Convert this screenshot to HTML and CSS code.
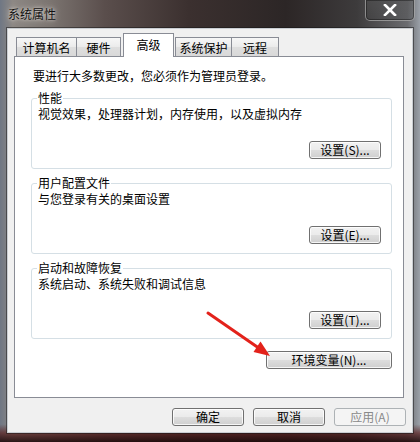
FILE: index.html
```html
<!DOCTYPE html>
<html lang="zh-CN">
<head>
<meta charset="utf-8">
<title>系统属性</title>
<link rel="stylesheet" href="styles.css">
</head>
<body>
<div class="frame">
  <div class="titlebar">
    <span class="title">系统属性</span>
    <div class="close">
      <svg width="14" height="12" viewBox="0 0 14 12"><path d="M2 1 L12 11 M12 1 L2 11" stroke="#fff" stroke-width="2.6" stroke-linecap="square"/></svg>
    </div>
  </div>
  <div class="client">
    <div class="tabs">
      <div class="tab t1">计算机名</div>
      <div class="tab t2">硬件</div>
      <div class="tab active">高级</div>
      <div class="tab t4">系统保护</div>
      <div class="tab t5">远程</div>
    </div>
    <div class="panel">
      <div class="intro">要进行大多数更改，您必须作为管理员登录。</div>
      <div class="group">
        <div class="legend">性能</div>
        <div class="desc">视觉效果，处理器计划，内存使用，以及虚拟内存</div>
        <div class="btnrow"><button class="btn">设置(S)...</button></div>
      </div>
      <div class="group">
        <div class="legend">用户配置文件</div>
        <div class="desc">与您登录有关的桌面设置</div>
        <div class="btnrow"><button class="btn">设置(E)...</button></div>
      </div>
      <div class="group">
        <div class="legend">启动和故障恢复</div>
        <div class="desc">系统启动、系统失败和调试信息</div>
        <div class="btnrow"><button class="btn">设置(T)...</button></div>
      </div>
      <div class="btnrow envrow"><button class="btn wide">环境变量(N)...</button></div>
    </div>
    <div class="footer">
      <button class="btn">确定</button>
      <button class="btn">取消</button>
      <button class="btn disabled">应用(A)</button>
    </div>
  </div>
  <svg class="arrow" width="420" height="442" viewBox="0 0 420 442">
    <line x1="208" y1="313" x2="258" y2="347.5" stroke="#e3221b" stroke-width="3" stroke-linecap="round"/>
    <polygon points="270,356 253.5,352 260.5,341.5" fill="#e3221b"/>
  </svg>
</div>
</body>
</html>
```
FILE: styles.css
```css
* { box-sizing: border-box; }
html, body { margin: 0; padding: 0; }
body {
  width: 420px;
  height: 442px;
  overflow: hidden;
  font-family: "Noto Sans CJK SC", "Noto Sans", sans-serif;
  font-size: 12px;
  color: #000;
}
.frame {
  position: relative;
  width: 420px;
  height: 442px;
  background:
    linear-gradient(180deg, rgba(0,0,0,0) 0%, rgba(0,0,0,0) 96%, rgba(90,30,30,0.7) 98%, rgba(30,10,10,0.9) 100%),
    linear-gradient(90deg, #6f7784 0%, #8d8884 3%, #7b7470 12%, #5a4e4c 25%, #3b302f 45%, #2c2626 68%, #3d3b3c 85%, #6b6c70 97%, #9aa0a8 100%);
}
.titlebar {
  height: 28px;
  display: flex;
  justify-content: space-between;
  align-items: flex-start;
}
.title {
  padding: 7px 0 0 8px;
  line-height: 14px;
  color: #111;
  text-shadow: 0 0 6px rgba(230,225,220,0.9), 0 0 3px rgba(230,225,220,0.8);
}
.close {
  width: 50px;
  height: 21px;
  margin-right: 5px;
  border: 1px solid rgba(200,200,200,0.55);
  border-top: none;
  border-radius: 0 0 5px 5px;
  box-shadow: inset 0 0 0 1px rgba(0,0,0,0.35);
  background: linear-gradient(180deg, rgba(80,80,80,0.5), rgba(60,60,60,0.3));
  display: flex;
  align-items: center;
  justify-content: center;
}
.client {
  margin-left: 7px;
  width: 406px;
  height: 405px;
  background: #f0f0f0;
  border: 1px solid #c9cdd2;
  box-shadow: 0 0 0 1px rgba(20,20,20,0.5);
  display: flex;
  flex-direction: column;
}
.tabs {
  display: flex;
  align-items: flex-end;
  margin-top: 4px;
  padding-left: 8px;
  height: 23px;
}
.tab {
  height: 19px;
  border: 1px solid #898c95;
  border-bottom: none;
  background: linear-gradient(180deg, #f7f7f7 0%, #ebebeb 50%, #dedede 51%, #d9d9d9 100%);
  display: flex;
  align-items: center;
  justify-content: center;
  line-height: 14px;
  padding-top: 1px;
}
.t1 { width: 61px; }
.t2 { width: 45px; margin-left: -1px; }
.tab.active {
  width: 51px;
  height: 24px;
  margin-left: 2px;
  margin-bottom: -1px;
  background: #fff;
  position: relative;
  z-index: 1;
  padding-top: 0;
  padding-bottom: 1px;
}
.t4 { width: 57px; margin-left: 1px; }
.t5 { width: 48px; margin-left: -1px; }
.panel {
  margin-left: 6px;
  width: 390px;
  height: 342px;
  background: #fff;
  border: 1px solid #898c95;
  padding: 12px 11px 0 16px;
  display: flex;
  flex-direction: column;
}
.intro {
  line-height: 14px;
  padding-left: 2px;
}
.group {
  margin-top: 15px;
  border: 1px solid #d5dfe5;
  border-radius: 3px;
  padding: 0 10px 9px 6px;
  display: flex;
  flex-direction: column;
}
.group + .group { margin-top: 14px; }
.legend {
  margin-top: -8px;
  margin-left: -1px;
  background: #fff;
  padding: 0 1px;
  width: fit-content;
  line-height: 14px;
}
.desc {
  margin-top: 2px;
  line-height: 14px;
}
.btnrow {
  display: flex;
  justify-content: flex-end;
  margin-top: 20px;
}
.envrow { margin-top: 12px; }
.btn {
  width: 72px;
  height: 18px;
  padding: 0;
  font-family: "Noto Sans CJK SC", "Noto Sans", sans-serif;
  font-size: 12px;
  line-height: 14px;
  color: #000;
  border: 1px solid #707070;
  border-radius: 3px;
  background: linear-gradient(180deg, #f2f2f2 0%, #ebebeb 48%, #dddddd 52%, #cfcfcf 100%);
  box-shadow: inset 0 0 0 1px rgba(255,255,255,0.8);
}
.btn.wide { width: 126px; }
.btn.disabled {
  border-color: #adb2b5;
  background: #f4f4f4;
  color: #8a8a8a;
  box-shadow: none;
}
.footer {
  margin-top: 10px;
  display: flex;
  justify-content: flex-end;
  gap: 9px;
  padding-right: 6px;
}
.arrow {
  position: absolute;
  left: 0;
  top: 0;
  pointer-events: none;
}
```
